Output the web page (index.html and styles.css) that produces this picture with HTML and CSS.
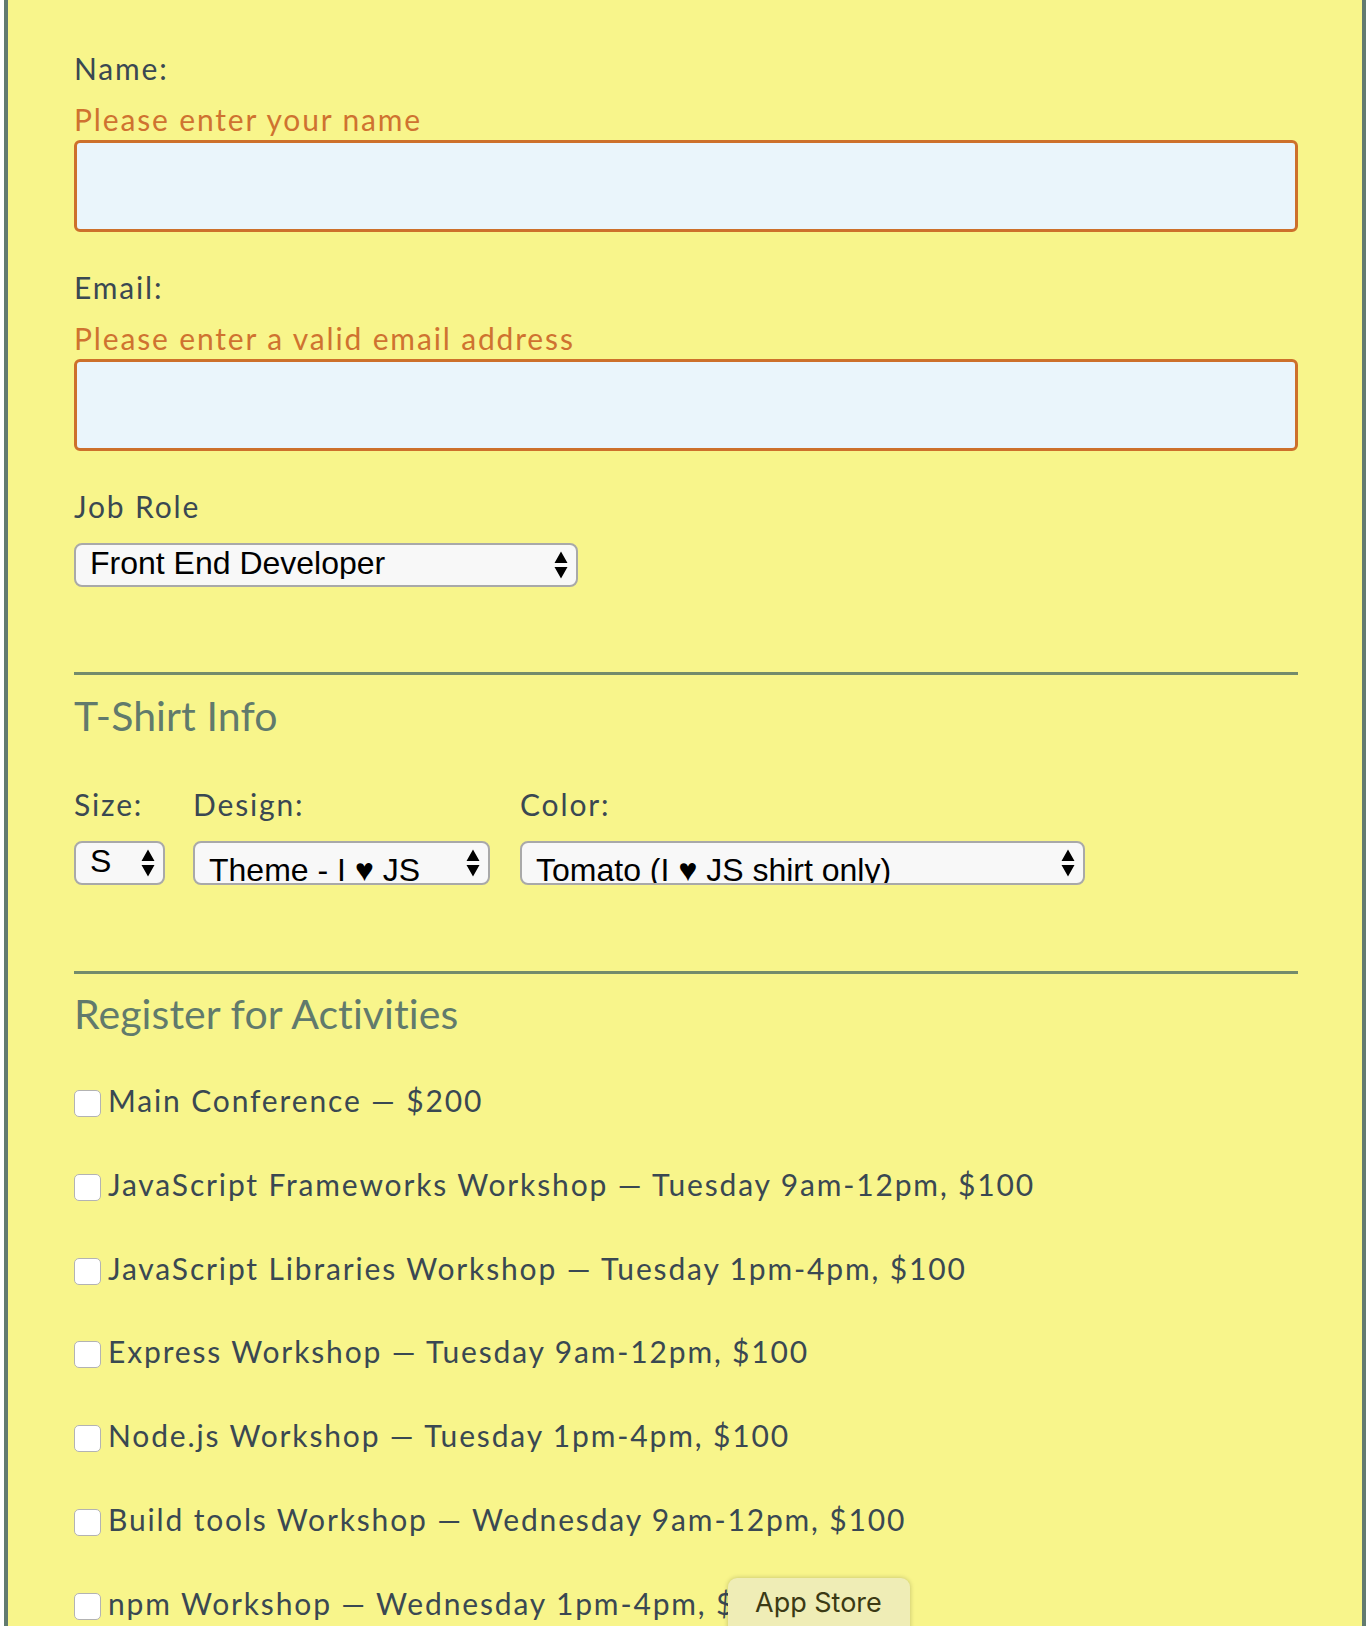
FILE: index.html
```html
<!DOCTYPE html>
<html lang="en">
<head>
<meta charset="utf-8">
<title>Conference Registration</title>
<link rel="stylesheet" href="styles.css">
</head>
<body>
<div class="page">
  <form class="form">
    <div class="basic">
      <label class="label" for="name">Name:</label>
      <span class="error">Please enter your name</span>
      <input class="text-input" type="text" id="name" name="user_name">

      <label class="label" for="mail">Email:</label>
      <span class="error">Please enter a valid email address</span>
      <input class="text-input" type="email" id="mail" name="user_email">

      <label class="label" for="title">Job Role</label>
      <div class="select-wrap role">
        <select id="title" name="user_title">
          <option>Front End Developer</option>
          <option>Back End Developer</option>
          <option>Full Stack JavaScript Developer</option>
          <option>Designer</option>
          <option>Student</option>
          <option>Other</option>
        </select>
        <svg class="arrows" width="14" height="28" viewBox="0 0 14 28"><path d="M7 0.5 L13.5 12 L0.5 12 Z M0.5 16 L13.5 16 L7 27.5 Z" fill="#000"/></svg>
      </div>
    </div>

    <section class="section shirt">
      <h2 class="heading">T-Shirt Info</h2>
      <div class="shirt-row">
        <div class="col col-size">
          <label class="label col-label" for="size">Size:</label>
          <div class="select-wrap">
            <select id="size" class="plain">
              <option>S</option><option>M</option><option>L</option><option>XL</option>
            </select>
            <svg class="arrows" width="14" height="28" viewBox="0 0 14 28"><path d="M7 0.5 L13.5 12 L0.5 12 Z M0.5 16 L13.5 16 L7 27.5 Z" fill="#000"/></svg>
          </div>
        </div>
        <div class="col col-design">
          <label class="label col-label" for="design">Design:</label>
          <div class="select-wrap">
            <select id="design" class="heart">
              <option>Theme - I &#9829; JS</option><option>Theme - JS Puns</option>
            </select>
            <svg class="arrows" width="14" height="28" viewBox="0 0 14 28"><path d="M7 0.5 L13.5 12 L0.5 12 Z M0.5 16 L13.5 16 L7 27.5 Z" fill="#000"/></svg>
          </div>
        </div>
        <div class="col col-color">
          <label class="label col-label" for="color">Color:</label>
          <div class="select-wrap">
            <select id="color" class="heart">
              <option>Tomato (I &#9829; JS shirt only)</option><option>Steel Blue</option><option>Dim Grey</option>
            </select>
            <svg class="arrows" width="14" height="28" viewBox="0 0 14 28"><path d="M7 0.5 L13.5 12 L0.5 12 Z M0.5 16 L13.5 16 L7 27.5 Z" fill="#000"/></svg>
          </div>
        </div>
      </div>
    </section>

    <section class="section activities">
      <h2 class="heading">Register for Activities</h2>
      <div class="activity-list">
        <label class="activity"><input type="checkbox" name="all">Main Conference — $200</label>
        <label class="activity"><input type="checkbox" name="js-frameworks">JavaScript Frameworks Workshop — Tuesday 9am-12pm, $100</label>
        <label class="activity"><input type="checkbox" name="js-libs">JavaScript Libraries Workshop — Tuesday 1pm-4pm, $100</label>
        <label class="activity"><input type="checkbox" name="express">Express Workshop — Tuesday 9am-12pm, $100</label>
        <label class="activity"><input type="checkbox" name="node">Node.js Workshop — Tuesday 1pm-4pm, $100</label>
        <label class="activity"><input type="checkbox" name="build-tools">Build tools Workshop — Wednesday 9am-12pm, $100</label>
        <label class="activity"><input type="checkbox" name="npm">npm Workshop — Wednesday 1pm-4pm, $100</label>
      </div>
    </section>
  </form>
</div>
<div class="tooltip">App Store</div>
</body>
</html>
```
FILE: styles.css
```css
html, body {
  margin: 0;
  padding: 0;
  background: #ffffff;
}

body {
  position: relative;
  font-family: "Lato", "Noto Sans", sans-serif;
  color: #3a4852;
}

.page {
  margin-left: 4px;
  width: 1362px;
  box-sizing: border-box;
  border-left: 4px solid #627b70;
  border-right: 4px solid #627b70;
  background: #f8f58b;
  padding: 50px 64px 120px 66px;
}

.label {
  display: block;
  font-size: 30px;
  line-height: 36px;
  letter-spacing: 1.85px;
}

.error {
  display: block;
  margin: 15px 0 3px;
  font-size: 30px;
  line-height: 36px;
  letter-spacing: 1.85px;
  color: #cf7230;
}

.text-input {
  display: block;
  box-sizing: border-box;
  width: 1224px;
  height: 92px;
  margin: 0 0 37px;
  padding: 0 16px;
  border: 3px solid #cd702b;
  border-radius: 6px;
  background: #eaf5fb;
  font: inherit;
  font-size: 30px;
  outline: none;
}

.basic .label + .select-wrap {
  margin-top: 19px;
}

.select-wrap {
  position: relative;
}

.select-wrap.role {
  width: 504px;
}

.select-wrap select {
  -webkit-appearance: none;
  appearance: none;
  display: block;
  box-sizing: border-box;
  width: 100%;
  height: 44px;
  margin: 0;
  padding: 0 34px 6px 14px;
  border: 2px solid #a9a9a9;
  border-radius: 8px;
  background: #f8f8f8;
  font-family: "Liberation Sans", Arial, "DejaVu Sans", sans-serif;
  font-size: 32px;
  color: #000;
  outline: none;
}

.select-wrap select.heart {
  padding-top: 9px;
  padding-bottom: 0;
}

.arrows {
  position: absolute;
  right: 10px;
  top: 50%;
  transform: translateY(-50%);
  pointer-events: none;
}

.section {
  margin-top: 85px;
  padding-top: 17px;
  border-top: 3px solid #738b6b;
}

.section.activities {
  margin-top: 86px;
  padding-top: 16px;
}

.heading {
  margin: 0;
  font-size: 41px;
  line-height: 48px;
  font-weight: 400;
  letter-spacing: 0.1px;
  color: #617a6c;
}

.shirt-row {
  display: flex;
  margin-top: 46px;
}

.col-label {
  margin-bottom: 19px;
}

.col-size {
  width: 91px;
  margin-right: 28px;
}

.col-design {
  width: 297px;
  margin-right: 30px;
}

.col-color {
  width: 565px;
}

.activity-list {
  margin-top: 44px;
}

.activity {
  display: flex;
  align-items: flex-start;
  font-size: 30px;
  line-height: 36px;
  letter-spacing: 1.85px;
  margin-bottom: 47.8px;
}

.activity input[type="checkbox"] {
  -webkit-appearance: none;
  appearance: none;
  flex: none;
  box-sizing: border-box;
  width: 27px;
  height: 27px;
  margin: 8px 7px 0 0;
  border: 1px solid #b3b3b3;
  border-radius: 5px;
  background: #ffffff;
}

.tooltip {
  position: absolute;
  left: 728px;
  top: 1578px;
  width: 182px;
  height: 64px;
  box-sizing: border-box;
  padding: 9px 0 0 27px;
  border-radius: 9px;
  background: #efedb6;
  box-shadow: 0 0 5px rgba(0, 0, 0, 0.22);
  font-family: "Inter", "Liberation Sans", sans-serif;
  font-size: 27px;
  line-height: 32px;
  color: #3b3a14;
}
```
